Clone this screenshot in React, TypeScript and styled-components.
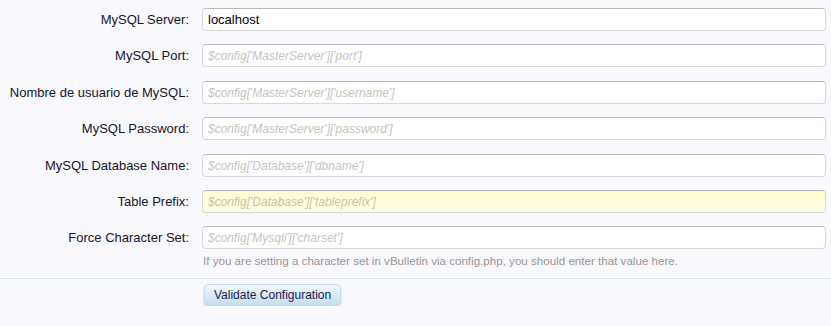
import React from 'react';
import styled, { createGlobalStyle } from 'styled-components';

const GlobalStyle = createGlobalStyle`
  html, body {
    margin: 0;
    padding: 0;
    background: #f9f9fd;
  }
  body {
    font-family: 'Liberation Sans', Arial, sans-serif;
    color: #141414;
  }
`;

const Form = styled.form`
  width: 831px;
  padding-top: 8px;
  box-sizing: border-box;
`;

const Fields = styled.div`
  display: flex;
  flex-direction: column;
  gap: 13.4px;
  padding-right: 5px;
`;

const Row = styled.div`
  display: grid;
  grid-template-columns: 189px 1fr;
  column-gap: 13px;
  align-items: start;
`;

const Label = styled.label`
  text-align: right;
  font-size: 13px;
  line-height: 23px;
  color: #14142b;
`;

const Control = styled.div`
  display: flex;
  flex-direction: column;
`;

const Input = styled.input<{ $focused?: boolean }>`
  box-sizing: border-box;
  height: 23px;
  width: 100%;
  padding: 0 5px;
  font-family: 'Liberation Sans', Arial, sans-serif;
  font-size: 13px;
  color: #000;
  border: 1px solid #d8d8d8;
  border-top-color: #b8b8b8;
  border-radius: 4px;
  background: ${(p) =>
    p.$focused ? 'linear-gradient(to bottom, #fffbd0, #ffffe8)' : '#fff'};
  outline: none;

  &::placeholder {
    font-style: italic;
    font-size: 12px;
    color: ${(p) => (p.$focused ? '#c8c4a0' : '#c4c4c4')};
  }
`;

const Hint = styled.div`
  font-size: 11.6px;
  color: #9a9494;
  margin-top: 5px;
  padding-left: 1px;
`;

const Divider = styled.div`
  border-top: 1px solid #d9e8f6;
  margin-top: 11px;
`;

const Actions = styled.div`
  padding: 5px 0 0 204px;
`;

const Button = styled.button`
  height: 22px;
  padding: 0 9px;
  font-family: 'Liberation Sans', Arial, sans-serif;
  font-size: 12px;
  color: #1b1b4a;
  border: 1px solid #c6dced;
  border-radius: 5px;
  background: linear-gradient(to bottom, #f1f7fc 0%, #dbeaf6 50%, #c4ddef 100%);
  box-shadow: 0 1px 2px rgba(120, 140, 160, 0.5);
`;

const fields = [
  { label: 'MySQL Server:', value: 'localhost' },
  { label: 'MySQL Port:', placeholder: "$config['MasterServer']['port']" },
  { label: 'Nombre de usuario de MySQL:', placeholder: "$config['MasterServer']['username']" },
  { label: 'MySQL Password:', placeholder: "$config['MasterServer']['password']" },
  { label: 'MySQL Database Name:', placeholder: "$config['Database']['dbname']" },
  { label: 'Table Prefix:', placeholder: "$config['Database']['tableprefix']", focused: true },
  {
    label: 'Force Character Set:',
    placeholder: "$config['Mysqli']['charset']",
    hint: 'If you are setting a character set in vBulletin via config.php, you should enter that value here.',
  },
];

const App = () => {
  return (
    <>
      <GlobalStyle />
      <Form onSubmit={(e) => e.preventDefault()}>
        <Fields>
          {fields.map((f) => (
            <Row key={f.label}>
              <Label>{f.label}</Label>
              <Control>
                <Input
                  $focused={f.focused}
                  defaultValue={f.value}
                  placeholder={f.placeholder}
                />
                {f.hint && <Hint>{f.hint}</Hint>}
              </Control>
            </Row>
          ))}
        </Fields>
        <Divider />
        <Actions>
          <Button type="button">Validate Configuration</Button>
        </Actions>
      </Form>
    </>
  );
};

export default App;
